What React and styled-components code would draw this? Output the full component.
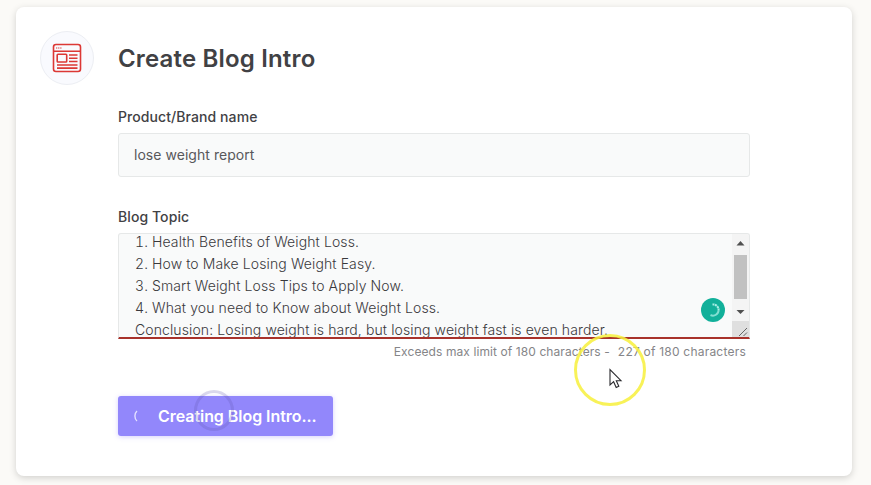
import React from 'react';
import styled, { createGlobalStyle } from 'styled-components';

const GlobalStyle = createGlobalStyle`
  * {
    box-sizing: border-box;
  }

  body {
    margin: 0;
    background: #fbfaf7;
    font-family: Inter, 'Liberation Sans', sans-serif;
    color: #414144;
    overflow: hidden;
  }
`;

const Page = styled.main`
  position: relative;
  height: 485px;
  padding: 7px 19px 9px 16px;
`;

const Card = styled.section`
  display: flex;
  gap: 24px;
  height: 469px;
  padding: 24px 102px 0 24px;
  background: #fff;
  border-radius: 8px;
  box-shadow: 0 2px 7px rgba(0, 0, 0, 0.17);
`;

const IconCircle = styled.div`
  display: flex;
  align-items: center;
  justify-content: center;
  flex: none;
  width: 54px;
  height: 54px;
  background: #f9fafe;
  border: 1px solid #eceef3;
  border-radius: 50%;
`;

const Form = styled.form`
  flex: 1;
  display: flex;
  flex-direction: column;
  align-items: stretch;
`;

const Title = styled.h1`
  margin: 0;
  height: 54px;
  font-size: 24px;
  font-weight: 600;
  line-height: 55px;
  letter-spacing: 0.17px;
  white-space: nowrap;
`;

const Label = styled.label`
  height: 20px;
  margin-top: ${({ $top }) => $top}px;
  margin-bottom: 6px;
  font-size: 14px;
  font-weight: 500;
  line-height: 20px;
  letter-spacing: 0.08px;
`;

const Field = styled.div`
  height: 44px;
  padding: 0 15px;
  border: 1px solid #e6e8e8;
  border-radius: 3px;
  background: #f9fafa;
  color: #58585b;
  font-size: 14px;
  line-height: 42px;
  letter-spacing: 0.04px;
`;

const TextArea = styled.div`
  position: relative;
  display: flex;
  height: 106px;
  border: 1px solid #e6e8e8;
  border-bottom: 2px solid #a8322b;
  border-radius: 3px 3px 0 0;
  background: #f9fafa;
  overflow: hidden;
`;

const Lines = styled.div`
  flex: 1;
  margin-top: -3px;
  padding-left: 16px;
  color: #39393c;
  font-size: 14px;
  font-weight: 300;
  line-height: 22px;
  letter-spacing: 0.11px;
  white-space: nowrap;
`;

const Line = styled.div`
  display: flex;
`;

const LineNumber = styled.span`
  width: 17px;
  font-variant-numeric: tabular-nums;
`;

const Scrollbar = styled.div`
  display: flex;
  flex-direction: column;
  align-items: center;
  flex: none;
  width: 17px;
  background: #f4f4f4;
`;

const Arrow = styled.svg`
  display: block;
  flex: none;
  width: 17px;
  height: ${({ $height }) => $height}px;
`;

const Thumb = styled.div`
  width: 13px;
  height: 44px;
  background: #c1c1c1;
`;

const CheckerBadge = styled.div`
  position: absolute;
  right: 24px;
  bottom: 15px;
  width: 24px;
  height: 24px;
  border-radius: 50%;
  background: #12b09a;

  svg {
    display: block;
  }
`;

const Hint = styled.div`
  display: flex;
  justify-content: flex-end;
  gap: 8px;
  height: 20px;
  margin-top: 3px;
  padding-right: 4px;
  color: #858588;
  font-size: 12px;
  line-height: 20px;
  letter-spacing: 0.09px;
  white-space: nowrap;
`;

const Count = styled.span`
  letter-spacing: 0.22px;
`;

const SubmitButton = styled.button`
  display: flex;
  align-items: center;
  align-self: flex-start;
  width: 215px;
  height: 40px;
  margin-top: 34px;
  padding: 0 0 0 14px;
  border: 0;
  border-radius: 3px;
  background: #9287fb;
  box-shadow: 0 1px 5px rgba(146, 135, 251, 0.38);
  color: #fff;
  font-family: inherit;
  font-size: 16px;
  font-weight: 600;
  letter-spacing: -0.05px;
  white-space: nowrap;

  svg {
    flex: none;
    margin-right: 12px;
  }
`;

const ClickRipple = styled.div`
  position: absolute;
  left: 194px;
  top: 390px;
  width: 40px;
  height: 41px;
  border: 3px solid rgba(91, 83, 170, 0.22);
  border-radius: 50%;
`;

const CursorRing = styled.div`
  position: absolute;
  left: 574px;
  top: 334px;
  width: 72px;
  height: 72px;
  border: 3px solid rgba(247, 240, 60, 0.86);
  border-radius: 50%;
`;

const Cursor = styled.svg`
  position: absolute;
  left: 609px;
  top: 368px;
`;

const topics = [
  { number: '1.', text: 'Health Benefits of Weight Loss.' },
  { number: '2.', text: 'How to Make Losing Weight Easy.' },
  { number: '3.', text: 'Smart Weight Loss Tips to Apply Now.' },
  { number: '4.', text: 'What you need to Know about Weight Loss.' },
  { text: 'Conclusion: Losing weight is hard, but losing weight fast is even harder.' },
];

const BlogIcon = () => (
  <svg width="30" height="30" viewBox="0 0 30 30" fill="none" stroke="#dc3835" strokeWidth="1.6">
    <rect x="1.5" y="1.5" width="27" height="27" rx="2.5" />
    <path d="M2 8.2H28M17 12H25.5M17 15.2H25.5M17 18.5H25.5M5 22H25.5M5 25.1H25.5" />
    <rect x="5.2" y="11.2" width="9.5" height="7.8" rx="0.8" />
    <path d="M4 5H9.5" strokeWidth="1" strokeDasharray="1.3 0.8" />
  </svg>
);

const App = () => (
  <>
    <GlobalStyle />
    <Page>
      <Card>
        <IconCircle>
          <BlogIcon />
        </IconCircle>
        <Form onSubmit={(e) => e.preventDefault()}>
          <Title>Create Blog Intro</Title>
          <Label $top={22}>Product/Brand name</Label>
          <Field>lose weight report</Field>
          <Label $top={30}>Blog Topic</Label>
          <TextArea>
            <Lines>
              {topics.map(({ number, text }) => (
                <Line key={text}>
                  {number && <LineNumber>{number}</LineNumber>}
                  <span>{text}</span>
                </Line>
              ))}
            </Lines>
            <Scrollbar>
              <Arrow viewBox="0 0 17 21" $height={21}>
                <path d="M4.5 11.5L8.5 7L12.5 11.5Z" fill="#505050" />
              </Arrow>
              <Thumb />
              <Arrow viewBox="0 0 17 22" $height={22}>
                <path d="M4.5 11L8.5 15L12.5 11Z" fill="#505050" />
              </Arrow>
              <Arrow viewBox="0 0 17 16" $height={16}>
                <path d="M0 0H17V16H0Z" fill="#dfdfdf" />
                <path d="M7 15L15 7M11.5 15L15 11.5" stroke="#666" strokeWidth="1" />
              </Arrow>
            </Scrollbar>
            <CheckerBadge>
              <svg width="24" height="24" viewBox="0 0 24 24" fill="none" stroke="#a8eee4">
                <path d="M11.5 6.4A5.6 5.6 0 0 1 17.6 12" strokeWidth="2" strokeDasharray="2 0.5" />
                <path d="M17.6 12A5.6 5.6 0 0 1 9.5 17" strokeWidth="2" opacity="0.75" />
              </svg>
            </CheckerBadge>
          </TextArea>
          <Hint>
            <span>Exceeds max limit of 180 characters -</span>
            <Count>227 of 180 characters</Count>
          </Hint>
          <SubmitButton type="submit">
            <svg width="14" height="14" viewBox="0 0 14 14" fill="none">
              <path d="M5 2C2.2 4.5 2.2 9.5 5 12" stroke="#e3dfff" strokeWidth="1.4" />
            </svg>
            Creating Blog Intro...
          </SubmitButton>
        </Form>
      </Card>
      <ClickRipple />
      <CursorRing />
      <Cursor width="14" height="22" viewBox="0 0 14 22">
        <path
          d="M1 1.5V17L4.6 13.7L7.2 19.5L9.8 18.3L7.3 12.7H12Z"
          fill="#fff"
          stroke="#29292d"
          strokeWidth="1.1"
        />
      </Cursor>
    </Page>
  </>
);

export default App;
